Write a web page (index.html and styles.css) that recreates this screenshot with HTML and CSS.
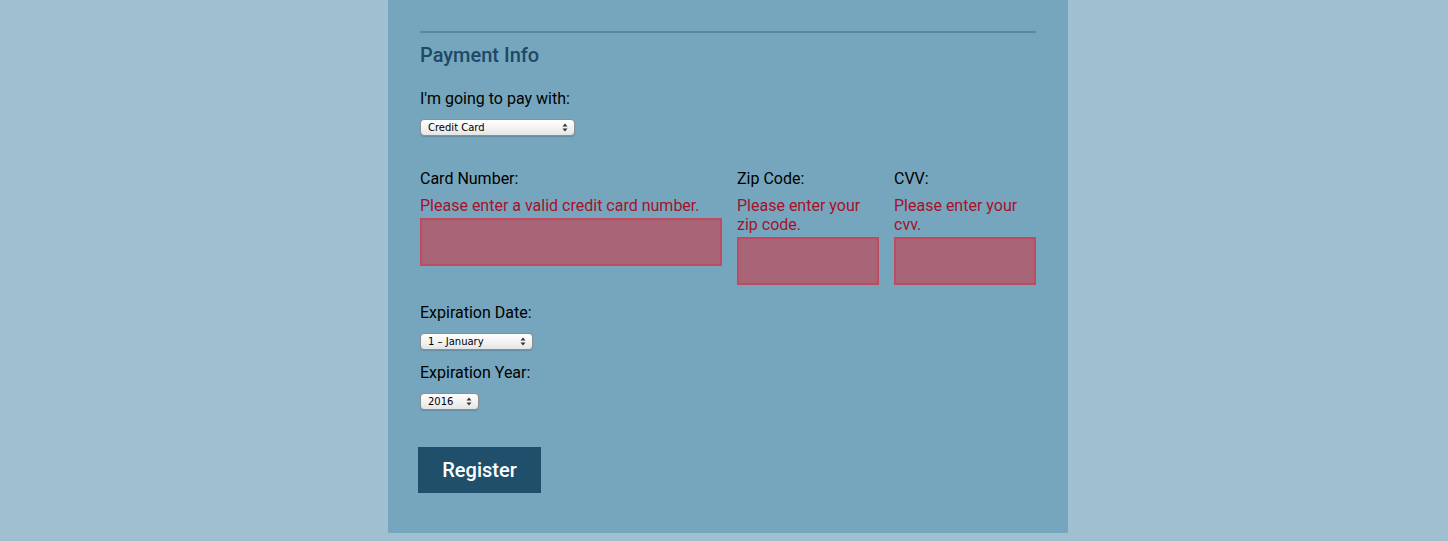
FILE: index.html
```html
<!DOCTYPE html>
<html>
<head>
<meta charset="utf-8">
<link rel="stylesheet" href="styles.css">
</head>
<body>
<div class="page">
  <form class="panel">
    <hr class="rule">
    <h2 class="title">Payment Info</h2>
    <label class="label">I'm going to pay with:</label>
    <div class="select w-pay">
      <span class="select-text">Credit Card</span>
      <svg class="arrows" width="6" height="9" viewBox="0 0 6 9"><path d="M3 0.5 L5.5 3.5 L0.5 3.5 Z M3 8.5 L5.5 5.5 L0.5 5.5 Z" fill="#333"/></svg>
    </div>
    <div class="card-row">
      <div class="field">
        <label class="label">Card Number:</label>
        <div class="error">Please enter a valid credit card number.</div>
        <div class="input"></div>
      </div>
      <div class="field">
        <label class="label">Zip Code:</label>
        <div class="error">Please enter your zip code.</div>
        <div class="input"></div>
      </div>
      <div class="field">
        <label class="label">CVV:</label>
        <div class="error">Please enter your cvv.</div>
        <div class="input"></div>
      </div>
    </div>
    <label class="label exp-date">Expiration Date:</label>
    <div class="select w-month">
      <span class="select-text">1 &ndash; January</span>
      <svg class="arrows" width="6" height="9" viewBox="0 0 6 9"><path d="M3 0.5 L5.5 3.5 L0.5 3.5 Z M3 8.5 L5.5 5.5 L0.5 5.5 Z" fill="#333"/></svg>
    </div>
    <label class="label exp-year">Expiration Year:</label>
    <div class="select w-year">
      <span class="select-text">2016</span>
      <svg class="arrows" width="6" height="9" viewBox="0 0 6 9"><path d="M3 0.5 L5.5 3.5 L0.5 3.5 Z M3 8.5 L5.5 5.5 L0.5 5.5 Z" fill="#333"/></svg>
    </div>
    <button type="button" class="btn">Register</button>
  </form>
</div>
</body>
</html>
```
FILE: styles.css
```css
html, body {
  margin: 0;
  padding: 0;
}
body {
  background: #a0c0d1;
  font-family: Roboto, "Liberation Sans", sans-serif;
  color: #000;
}
.page {
  display: flex;
  justify-content: center;
  padding-left: 8px;
}
.panel {
  width: 616px;
  background: #76a6bd;
  padding: 31px 32px 40px;
  display: flex;
  flex-direction: column;
  align-items: flex-start;
}
.rule {
  width: 100%;
  margin: 0;
  border: 0;
  border-top: 2px solid #5a8aa3;
  height: 0;
}
.title {
  margin: 10px 0 0;
  font-size: 20px;
  line-height: 24px;
  font-weight: 500;
  color: #1d4966;
}
.label {
  display: block;
  font-size: 16px;
  line-height: 19px;
  margin-top: 22px;
}
.select {
  margin-top: 11px;
  height: 17px;
  box-sizing: border-box;
  border: 1px solid #8a8f95;
  border-radius: 4px;
  background: linear-gradient(#ffffff, #f1f1f1 60%, #e4e4e4);
  box-shadow: 0 1px 1px rgba(0,0,0,0.15);
  display: flex;
  align-items: center;
  justify-content: space-between;
  padding: 0 6px 0 7px;
  font-family: "Lucida Grande", "DejaVu Sans", sans-serif;
  font-size: 10px;
  color: #000;
}
.select-text {
  line-height: 15px;
}
.arrows {
  display: block;
  flex: none;
}
.w-pay { width: 155px; }
.w-month { width: 113px; }
.w-year { width: 59px; }
.card-row {
  width: 100%;
  margin-top: 14px;
  display: grid;
  grid-template-columns: 302px 142px 142px;
  column-gap: 15px;
  align-items: start;
}
.card-row .label {
  margin-top: 19px;
}
.field {
  display: flex;
  flex-direction: column;
}
.error {
  margin-top: 8px;
  font-size: 16px;
  line-height: 19px;
  color: #a8102a;
}
.input {
  margin-top: 3px;
  height: 48px;
  box-sizing: border-box;
  background: #a86577;
  border: 2px solid #c04a60;
}
.exp-date {
  margin-top: 18px;
}
.exp-year {
  margin-top: 13px;
}
.btn {
  margin: 37px 0 0 -2px;
  width: 123px;
  height: 46px;
  border: 0;
  background: #1f4f6b;
  color: #fff;
  font-family: Roboto, "Liberation Sans", sans-serif;
  font-size: 20px;
  font-weight: 500;
  padding: 0;
  cursor: pointer;
}
```
